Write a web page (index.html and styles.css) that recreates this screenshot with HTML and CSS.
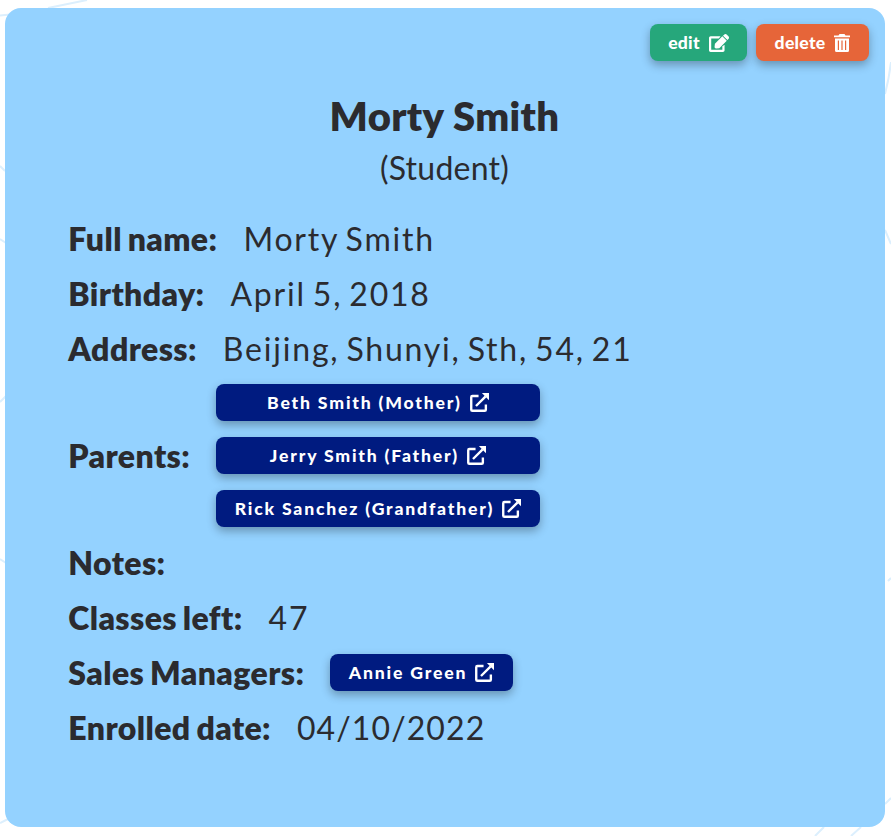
FILE: index.html
```html
<!DOCTYPE html>
<html lang="en">
<head>
<meta charset="utf-8">
<title>Morty Smith</title>
<link rel="stylesheet" href="styles.css">
</head>
<body>
<svg width="0" height="0" class="defs">
  <symbol id="open" viewBox="0 0 20 20"><path d="M9 3.200H2.500Q1.300 3.200 1.300 4.400V17.500Q1.300 18.700 2.500 18.700H15.500Q16.700 18.700 16.700 17.500V12M6.300 13.700 16.500 3.500" fill="none" stroke="currentColor" stroke-width="2.500"/><path d="M12.500 0H20V7.500Z" fill="currentColor"/></symbol>
  <symbol id="edit" viewBox="0 0 576 512"><path fill="currentColor" d="M402.300 344.900l32-32c5-5 13.700-1.500 13.700 5.700V464c0 26.500-21.500 48-48 48H48c-26.500 0-48-21.500-48-48V112c0-26.500 21.500-48 48-48h273.500c7.100 0 10.700 8.600 5.700 13.700l-48 50H64v320h320V350.500c0-2.100 16-4.100 18.300-5.600z"/><path d="M384 64 512 192 296 406l-90 10c-26 3-48-19-46-46l10-90ZM403 45l30-28c23-23 60-23 83 0l43 43c23 23 23 60 0 83l-28 30Z" fill="currentColor"/></symbol>
  <symbol id="trash" viewBox="0 0 16 18"><path fill="currentColor" fill-rule="evenodd" d="M0 1.500H4.500L5.500 0H10.500L11.500 1.500H16V3.300H0ZM1 4.500H15V16.500Q15 18 13.500 18H2.500Q1 18 1 16.500ZM3.800 6.500V16H5V6.500ZM7.400 6.500V16H8.600V6.500ZM11 6.500V16H12.200V6.500Z"/></symbol>
</svg>
<svg class="backdrop" viewBox="0 0 891 836" aria-hidden="true">
  <path d="M0 15.500 10 14.500M48 8 87 0M0 166 5 171M0 239 6 243M0 402 6 396M0 559 6 563M0 823 8 819M885 94Q889 79 891 62M885 230 891 244M815 836 824 827M851 836 861 827M885 804 891 798M888 581 891 578"/>
</svg>
<main class="card">
  <div class="actions">
    <button class="btn edit">edit <svg class="icon-edit"><use href="#edit"/></svg></button>
    <button class="btn delete">delete <svg class="icon-trash"><use href="#trash"/></svg></button>
  </div>
  <header>
    <h1>Morty Smith</h1>
    <p class="role">(Student)</p>
  </header>
  <section class="details">
    <div class="row"><b>Full name:</b><span>Morty Smith</span></div>
    <div class="row"><b>Birthday:</b><span>April 5, 2018</span></div>
    <div class="row"><b>Address:</b><span>Beijing, Shunyi, Sth, 54, 21</span></div>
    <div class="row"><b>Parents:</b>
      <div class="links">
        <button class="btn link">Beth Smith (Mother) <svg class="icon-open"><use href="#open"/></svg></button>
        <button class="btn link">Jerry Smith (Father) <svg class="icon-open"><use href="#open"/></svg></button>
        <button class="btn link">Rick Sanchez (Grandfather) <svg class="icon-open"><use href="#open"/></svg></button>
      </div>
    </div>
    <div class="row"><b>Notes:</b></div>
    <div class="row"><b>Classes left:</b><span>47</span></div>
    <div class="row"><b>Sales Managers:</b>
      <div class="links"><button class="btn link">Annie Green <svg class="icon-open"><use href="#open"/></svg></button></div>
    </div>
    <div class="row"><b>Enrolled date:</b><span class="date">04/10/2022</span></div>
  </section>
</main>
</body>
</html>
```
FILE: styles.css
```css
* { box-sizing: border-box; }
body {
  margin: 0;
  height: 836px;
  padding: 8px 6px 9px 5px;
  overflow: hidden;
  background: #fff;
  color: #2b2b2f;
  font-family: Lato, sans-serif;
}
.defs { position: absolute; }
.backdrop {
  position: absolute;
  inset: 0;
  width: 891px;
  height: 836px;
  fill: none;
  stroke: #dceffd;
  stroke-width: 2;
}
.card {
  position: relative;
  height: 819px;
  padding: 16px;
  border-radius: 16px;
  background: #94d2ff;
}
.actions { display: flex; justify-content: flex-end; gap: 9px; }
.btn {
  display: flex;
  align-items: center;
  justify-content: center;
  gap: 9px;
  height: 37px;
  padding: 0 18px;
  border: 0;
  border-radius: 8px;
  color: #fff;
  font: 900 17.600px/37px Lato, sans-serif;
  letter-spacing: .25px;
  white-space: nowrap;
  box-shadow: 0 4px 10px rgba(0, 0, 0, .3);
}
.edit { width: 97px; background: #26a77b; }
.delete { width: 113px; background: #e66539; }
.icon-edit { width: 20px; height: 18px; flex: none; }
.icon-trash { width: 16px; height: 18px; flex: none; }
.icon-open { width: 19px; height: 19px; flex: none; }
header { text-align: center; padding-top: 30px; }
h1 { margin: 0 1px 0 0; font-size: 40px; font-weight: 800; line-height: 50px; letter-spacing: .35px; }
.role { margin: 0 1px 0 0; font-size: 32px; line-height: 54px; letter-spacing: .25px; }
.details { padding: 16px 0 0 47.300px; }
.row { display: flex; align-items: center; gap: 26px; min-height: 55px; font-size: 32px; }
.row b { font-weight: 800; letter-spacing: .4px; word-spacing: -2px; }
.row span { letter-spacing: 1.800px; word-spacing: -3px; }
.row .date { letter-spacing: 1.100px; }
.links { display: flex; flex-direction: column; gap: 16px; padding: 8px 0; }
.link { background: #001b80; letter-spacing: 1.820px; gap: 7.900px; padding: 0 18.500px; }
```
